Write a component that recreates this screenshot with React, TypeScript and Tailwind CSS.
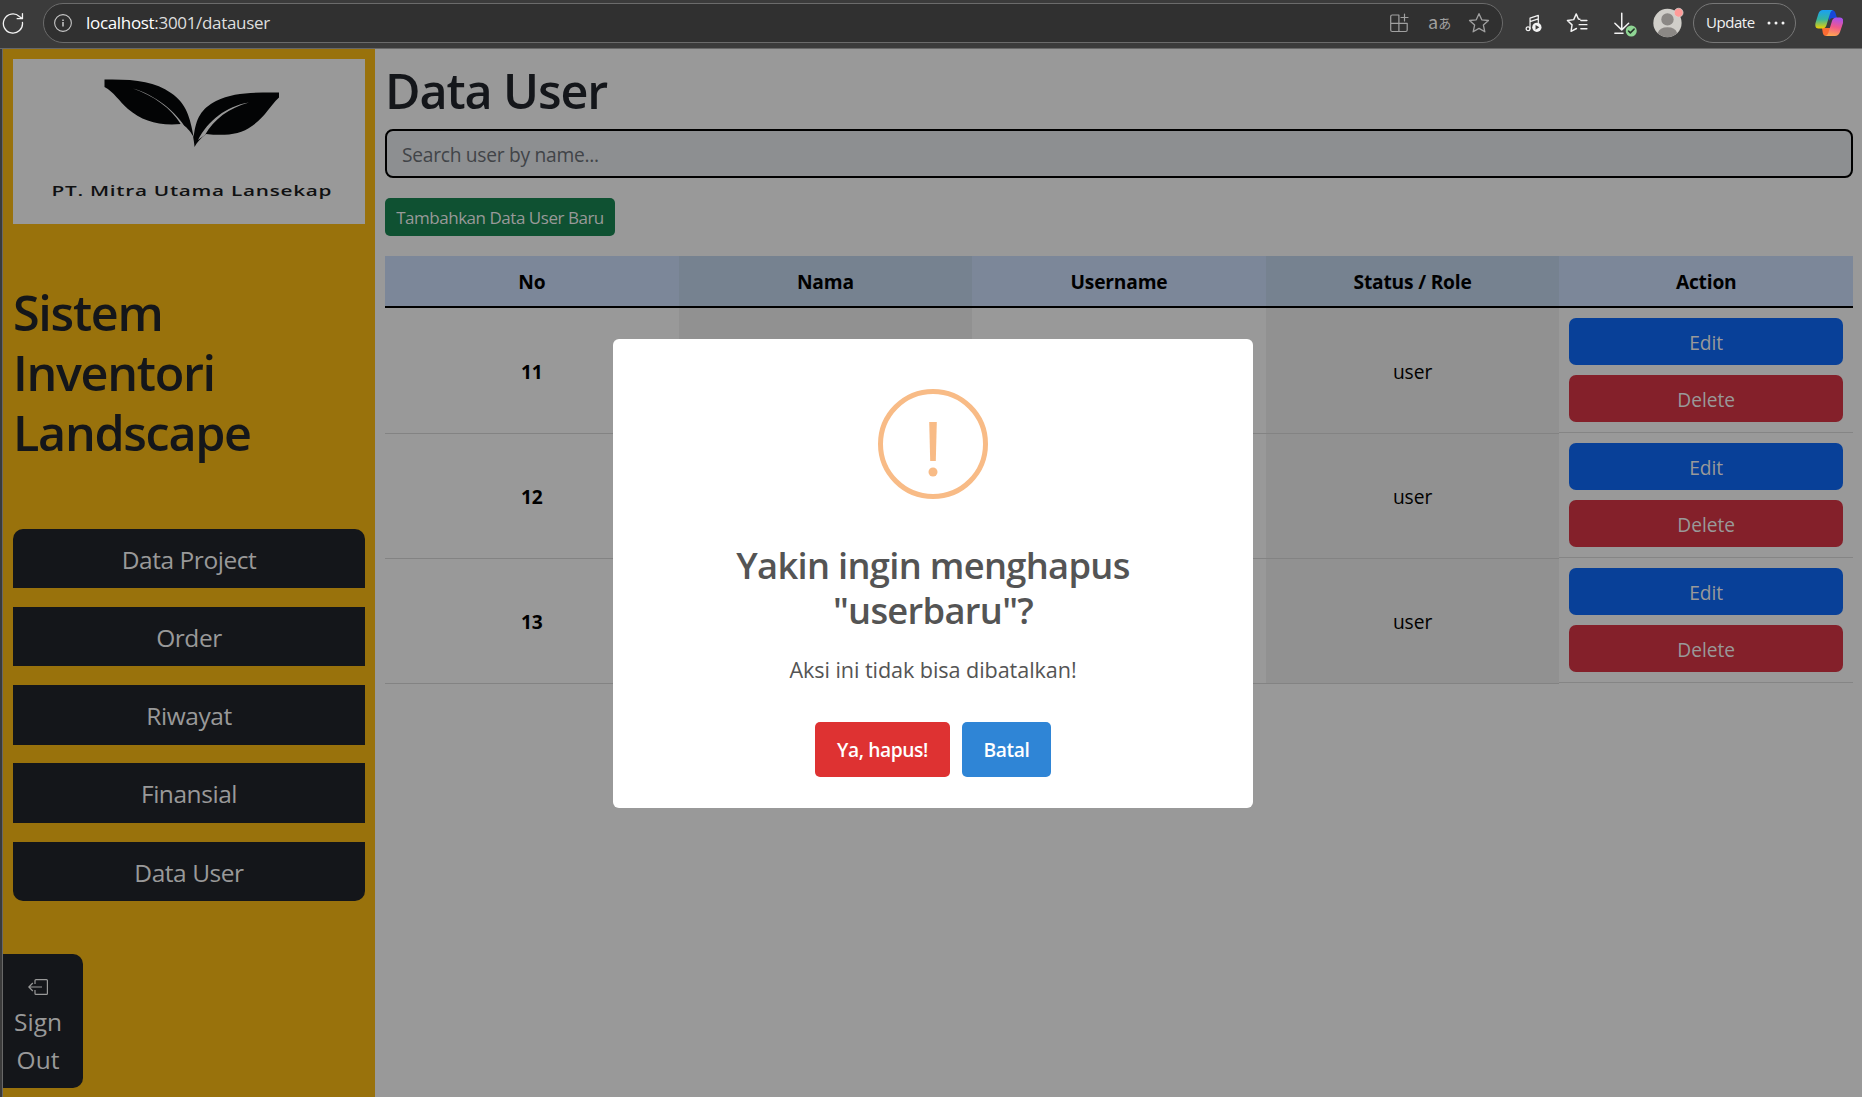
import type { ReactNode } from "react";

const HEAD = ["No", "Nama", "Username", "Status / Role", "Action"];
const ROWS = ["11", "12", "13"];
const MENU = [
  { label: "Data Project", shape: "h-[59px] rounded-t-[10px] pt-[3px]", gap: "mb-[19px]" },
  { label: "Order", shape: "h-[59px] pt-[3px]", gap: "mb-[19px]" },
  { label: "Riwayat", shape: "h-[60px] pt-[3px]", gap: "mb-[18px]" },
  { label: "Finansial", shape: "h-[60px] pt-[3px]", gap: "mb-[19px]" },
  { label: "Data User", shape: "h-[59px] rounded-b-[10px] pt-[3px]", gap: "" },
];

function Icon({ children, className }: { children: ReactNode; className: string }) {
  return (
    <svg viewBox="0 0 20 20" fill="none" stroke="currentColor" strokeWidth="1" strokeLinecap="round" strokeLinejoin="round" className={className}>
      {children}
    </svg>
  );
}

function Toolbar() {
  return (
    <header className="flex h-[49px] items-start border-b border-[#686868] bg-[#3b3b3b] text-[#f2f2f2]">
      <Icon className="mt-[12px] ml-[2px] h-[22px] w-[22px] shrink-0">
        <path strokeWidth="1.2" d="M18.6 9.500A8.700 8.700 0 1 1 15.800 4L18.200 6M18.600 1.400V6.100H13.800" />
      </Icon>
      <div className="mt-[3px] ml-[19px] flex h-[40px] w-[1460px] shrink-0 items-center rounded-full border border-[#6b6b6b] bg-[#303030]">
        <Icon className="ml-[10px] h-[18px] w-[18px] text-[#c8c8c8]">
          <circle cx="10" cy="10" r="9.300" strokeWidth="1.200" />
          <path strokeWidth="1.700" strokeLinecap="butt" d="M10 9v5M10 6v1.700" />
        </Icon>
        <span className="ml-[14px] pb-[2px] text-[17px] leading-none tracking-[-0.320px] text-white">
          localhost<span className="text-[#dedede]">:3001/datauser</span>
        </span>
        <div className="mr-[12px] ml-auto flex items-center text-[#a0a0a0]">
          <Icon className="h-[20px] w-[20px]">
            <path strokeWidth="1.200" d="M9.500 2H3.200Q1.700 2 1.700 3.500V17q0 1.500 1.500 1.500H16.700q1.500 0 1.500-1.500V10.300H1.700M9.900 2V18.500M15.500 1v7M12 4.500h7" />
          </Icon>
          <span className="ml-[19px] flex h-[20px] w-[22px] items-center font-['Noto_Sans_CJK_JP',sans-serif] leading-none">
            <span className="-mt-[4px] text-[18px]">a</span>
            <span className="-mt-[2px] text-[13px]">あ</span>
          </span>
          <Icon className="ml-[18px] h-[22px] w-[22px]">
            <path strokeWidth="1.200" d="M10 1.500 12.500 7.100 18.600 7.700 14 11.900 15.300 18 10 14.900 4.700 18 6 11.900 1.400 7.700 7.500 7.100Z" />
          </Icon>
        </div>
      </div>
      <Icon className="mt-[14px] ml-[22px] h-[19px] w-[19px] shrink-0">
        <circle cx="3.200" cy="15.500" r="2" strokeWidth="1.300" />
        <path strokeWidth="1.300" d="M5.300 15.500V4.300L14 1.500V9M5.300 8 14 5.200" />
        <circle cx="12.500" cy="14" r="4.900" fill="currentColor" stroke="none" />
        <path fill="#3b3b3b" stroke="none" d="M11.100 11.500v5l4-2.500z" />
      </Icon>
      <Icon className="mt-[12px] ml-[22px] h-[22px] w-[22px] shrink-0">
        <path strokeWidth="1.300" d="M12.600 6.600 11.300 6.300 9.300 1.700 7 6.900 1.300 7.700 5.500 11.700 4.600 17.600 9.500 15M13.500 7.700h5.500M12 11.500h7M13.500 15.300h5.500" />
      </Icon>
      <Icon className="mt-[12px] ml-[25px] h-[25px] w-[25px] shrink-0">
        <path strokeWidth="1.200" d="M7 1V14M1.500 9 7 14.300 12.500 9M1.500 17H8" />
        <circle cx="14.600" cy="15.200" r="4.400" fill="#8fd694" stroke="none" />
        <path stroke="#26332a" strokeWidth="1.200" d="m12.400 15.200 1.500 1.500 3-3" />
      </Icon>
      <svg viewBox="0 0 30 30" className="mt-[7px] ml-[15px] h-[31px] w-[31px] shrink-0">
        <circle cx="14" cy="15.500" r="13.700" fill="#d0cec9" />
        <circle cx="14" cy="12" r="6" fill="#8b8885" />
        <path d="M4.500 25.300Q6.500 19.500 14 19.500T23.500 25.300Q14 33 4.500 25.300Z" fill="#8b8885" />
        <circle cx="24.800" cy="5.500" r="4.300" fill="#ff9b98" stroke="#d9d5d2" strokeWidth=".7" />
      </svg>
      <div className="mt-[3px] ml-[9px] flex h-[40px] w-[103px] shrink-0 items-center rounded-full border border-[#777] pl-[12px] text-[15px] leading-none tracking-[-0.450px]">
        <span className="pb-px">Update</span>
        <svg viewBox="0 0 18 4" className="ml-[12px] h-[4px] w-[18px]" fill="#f4f4f4">
          <circle cx="2" cy="2" r="1.500" />
          <circle cx="9" cy="2" r="1.500" />
          <circle cx="16" cy="2" r="1.500" />
        </svg>
      </div>
      <svg viewBox="0 0 28 26" className="mt-[10px] ml-[19px] h-[26px] w-[28px] shrink-0">
        <defs>
          <linearGradient id="a" x1="0" y1="0" x2="0" y2="1">
            <stop stopColor="#1aa0f5" />
            <stop offset=".5" stopColor="#34b4a0" />
            <stop offset="1" stopColor="#f0d000" />
          </linearGradient>
          <linearGradient id="b" x1=".6" y1="0" x2=".4" y2="1">
            <stop stopColor="#a850f0" />
            <stop offset=".5" stopColor="#f0588c" />
            <stop offset="1" stopColor="#ffa650" />
          </linearGradient>
        </defs>
        <path fill="#1748d8" d="M12 0h5q2.500 0 3.300 2.500L22 8h-4q-3 0-4 3z" />
        <path fill="#fb6b32" d="M7 18h8l3-3-3 8q-1 3-4 3-2.500 0-3.200-3z" />
        <path fill="url(#a)" d="M8 0h10q-2 .5-2.800 3L11.500 15q-1 3.500-4.500 3.500H3.500Q-.5 18.500.5 13L3.300 4Q4.500 0 8 0Z" />
        <path fill="url(#b)" d="M20 26H10.500q2-.5 2.800-3L17 11q1-3.500 4.500-3.500H25q4 0 3 5.500L25 22q-1.500 4-5 4Z" />
      </svg>
    </header>
  );
}

function Logo() {
  return (
    <div className="flex h-[165px] w-[352px] flex-col items-center bg-[#999999] pl-[5px]">
      <svg viewBox="0 0 176 70" className="mt-[19px] h-[70px] w-[176px]">
        <path fill="#030405" d="M.5 1.500C30 1 50 3 67 15 83 26 86 40 89.700 59 92 40 97 31 112 23 130 14 150 14.500 175 14.500v5C165 29 162 38 148 48 136 57 120 58 102 56 97 60 93 64 90.500 69 90.500 67 90 64 89 58 86 53 82 48 77 46 55 48 38 43 24 31 15 23 10 14 .5 9Z" />
        <path fill="#999999" d="M29 10.500C51 17 72 33 83 52L77 46.500C67 30 50 18 29 10.500ZM145 24.500C125 30 110 41 101 57L94 62C104 43 122 28 145 24.500Z" />
      </svg>
      <span className="mt-[31px] h-[24px] origin-center scale-x-[1.480] text-[14px] leading-[24px] font-semibold tracking-[0.500px] whitespace-nowrap text-[#101112]">
        PT. Mitra Utama Lansekap
      </span>
    </div>
  );
}

function Sidebar() {
  return (
    <aside className="flex w-[372px] shrink-0 flex-col bg-[#99720c] px-[10px] pt-[10px]">
      <Logo />
      <h1 className="mt-[58px] mb-[67px] text-[48.500px] leading-[60px] font-semibold tracking-[-1.300px] text-[#14161a]">
        Sistem
        <br />
        Inventori
        <br />
        Landscape
      </h1>
      <nav className="flex flex-col">
        {MENU.map((m) => (
          <button key={m.label} className={`flex items-center justify-center bg-[#14161a] text-[24.500px] leading-none tracking-[-0.450px] text-[#999999] ${m.shape} ${m.gap}`}>
            {m.label}
          </button>
        ))}
      </nav>
      <button className="mt-[53px] -ml-[10px] flex h-[134px] w-[80px] flex-col items-center rounded-r-[10px] bg-[#14161a] pr-[10px] text-[24.500px] leading-[38px] text-[#999999]">
        <svg viewBox="0 0 20 16" fill="none" stroke="currentColor" strokeWidth="1.200" className="mt-[25px] mb-[8px] h-[16px] w-[20px] shrink-0">
          <path d="M7 5V1.500Q7 .6 8 .6H18.500Q19.400.6 19.400 1.500V14.500Q19.400 15.400 18.500 15.400H8Q7 15.400 7 14.500V11M14 8H.8M4.800 4 .8 8l4 4" />
        </svg>
        <span>Sign</span>
        <span>Out</span>
      </button>
    </aside>
  );
}

function UserTable() {
  return (
    <table className="mt-[20px] w-[1468px] table-fixed border-separate border-spacing-0 text-center text-[19.200px] tracking-[-0.050px] text-black">
      <thead>
        <tr className="h-[52px]">
          {HEAD.map((h, i) => (
            <th key={h} className={`border-b-2 border-black p-0 pt-[3px] font-bold tracking-[-0.200px] ${i % 2 ? "bg-[#768290]" : "bg-[#7c8799]"}`}>
              {h}
            </th>
          ))}
        </tr>
      </thead>
      <tbody className="[&>tr+tr>td:not(:last-child)]:border-t [&>tr+tr>td:not(:last-child)]:border-[#838383] [&>tr+tr>td:not(:last-child)]:pt-[2px] [&>tr:last-child>td:not(:last-child)]:shadow-[0_1px_0_#838383]">
        {ROWS.map((n) => (
          <tr key={n} className="h-[125px]">
            <td className="p-0 pt-[4px] font-bold">{n}</td>
            <td className="bg-[#919191] p-0" />
            <td className="p-0" />
            <td className="bg-[#919191] p-0 pt-[4px]">user</td>
            <td className="p-0 align-top">
              <div className="flex h-[125px] flex-col gap-[10px] border-b border-[#858585] px-[10px] pt-[10px] text-[#999999]">
                <button className="h-[47px] rounded-[7px] bg-[#084098] pt-[4px]">Edit</button>
                <button className="h-[47px] rounded-[7px] bg-[#84202a] pt-[4px]">Delete</button>
              </div>
            </td>
          </tr>
        ))}
      </tbody>
    </table>
  );
}

function ConfirmDialog() {
  return (
    <div className="absolute top-[339px] left-[613px] flex h-[469px] w-[640px] flex-col items-center rounded-[6px] bg-white text-[#545454]">
      <svg viewBox="0 0 110 110" className="mt-[50px] h-[110px] w-[110px]">
        <circle cx="55" cy="55" r="52.500" fill="none" stroke="#f8bb86" strokeWidth="5" />
        <path fill="#f8bb86" d="M51.200 33h7.600l-1 39h-5.600z" />
        <circle cx="55" cy="83" r="4.500" fill="#f8bb86" />
      </svg>
      <h2 className="mt-[44px] text-center text-[36.300px] leading-[45px] font-semibold tracking-[-0.700px] whitespace-nowrap">
        Yakin ingin menghapus
        <br />
        "userbaru"?
      </h2>
      <p className="mt-[20px] text-[21.600px] leading-[34px] tracking-[-0.070px] whitespace-nowrap">Aksi ini tidak bisa dibatalkan!</p>
      <div className="mt-[35px] flex gap-[12px] text-[19.200px] font-semibold tracking-[-0.400px] text-white">
        <button className="h-[55px] w-[135px] rounded-[5px] bg-[#de3232] pt-[2px] whitespace-nowrap">Ya, hapus!</button>
        <button className="h-[55px] w-[89px] rounded-[5px] bg-[#2f85d6] pt-[2px]">Batal</button>
      </div>
    </div>
  );
}

export default function App() {
  return (
    <div className="relative flex h-[1097px] w-[1862px] flex-col overflow-hidden bg-[#999999] font-['Open_Sans','Noto_Sans',sans-serif]">
      <Toolbar />
      <div className="flex flex-1 border-l border-[#3b3b3b]">
        <div className="w-[2px] border-r border-l border-r-[#686868] border-l-[#3b3b3b]" />
        <Sidebar />
        <main className="flex flex-1 flex-col items-start pl-[10px]">
          <h1 className="mt-[11px] text-[48.500px] leading-[60px] font-semibold tracking-[-1.100px] text-[#14161a]">Data User</h1>
          <div className="mt-[9px] flex h-[49px] w-[1468px] items-center rounded-[8px] border-2 border-black bg-[#8d8f91] pt-[4px] pl-[15px] text-[19.200px] tracking-[-0.270px] text-[#414448]">
            Search user by name...
          </div>
          <button className="mt-[20px] h-[38px] w-[230px] rounded-[5px] bg-[#0f5132] pt-[2px] text-[17px] tracking-[-0.470px] whitespace-nowrap text-[#999999]">
            Tambahkan Data User Baru
          </button>
          <UserTable />
        </main>
      </div>
      <ConfirmDialog />
    </div>
  );
}
